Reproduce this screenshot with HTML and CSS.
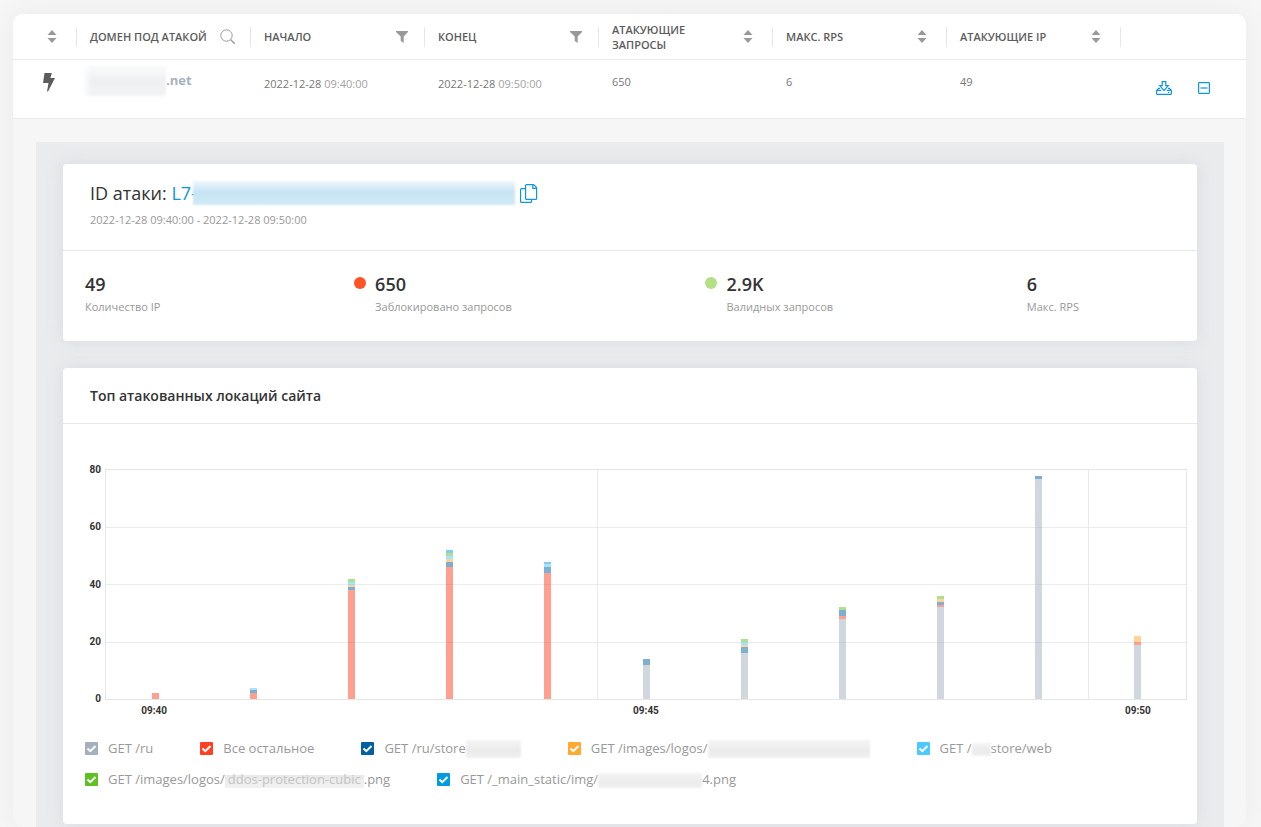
FILE: index.html
```html
<!DOCTYPE html>
<html lang="ru">
<head>
<meta charset="utf-8">
<meta name="viewport" content="width=device-width, initial-scale=1">
<title>Атаки</title>
<link rel="stylesheet" href="styles.css">
</head>
<body>
<svg class="sprite" aria-hidden="true">
  <symbol id="sort" viewBox="0 0 10 13"><path d="M5 0 9.500 5H.5zM5 13 .5 8h9z" fill="#999"/></symbol>
  <symbol id="filter" viewBox="0 0 12 12"><path d="M0 0h12v1L7.700 5.500V12L4.700 10V5.500L0 1z" fill="#999"/></symbol>
</svg>
<main class="panel">
  <table class="attacks">
    <colgroup><col class="col-type"><col><col><col><col><col><col><col class="col-actions"></colgroup>
    <thead>
      <tr>
        <th><div class="head head-sort"><button class="icon-btn" aria-label="Сортировать"><svg width="10" height="13"><use href="#sort"/></svg></button></div></th>
        <th><div class="head head-search"><span>ДОМЕН ПОД АТАКОЙ</span><button class="icon-btn" aria-label="Поиск"><svg width="16" height="16" viewBox="0 0 16 16" fill="none" stroke="#999"><circle cx="6.500" cy="6.500" r="5.700"/><path d="m10.800 10.800 4 4" stroke-width="1.300"/></svg></button></div></th>
        <th><div class="head head-filter"><span>НАЧАЛО</span><button class="icon-btn" aria-label="Фильтр"><svg width="12" height="12"><use href="#filter"/></svg></button></div></th>
        <th><div class="head head-filter"><span>КОНЕЦ</span><button class="icon-btn" aria-label="Фильтр"><svg width="12" height="12"><use href="#filter"/></svg></button></div></th>
        <th><div class="head"><span>АТАКУЮЩИЕ<br>ЗАПРОСЫ</span><button class="icon-btn" aria-label="Сортировать"><svg width="10" height="13"><use href="#sort"/></svg></button></div></th>
        <th><div class="head"><span>МАКС. RPS</span><button class="icon-btn" aria-label="Сортировать"><svg width="10" height="13"><use href="#sort"/></svg></button></div></th>
        <th><div class="head"><span>АТАКУЮЩИЕ IP</span><button class="icon-btn" aria-label="Сортировать"><svg width="10" height="13"><use href="#sort"/></svg></button></div></th>
        <th></th>
      </tr>
    </thead>
    <tbody>
      <tr>
        <td class="type"><svg width="12" height="19" viewBox="0 0 12 19"><path d="M1.500 0h7.300L7.400 5H12L5 18.500H4L5.500 10H0z" fill="#5c5c5c"/></svg></td>
        <td class="domain"><div class="domain-name"><span class="mask mask-domain"></span>.net</div></td>
        <td class="date">2022-12-28 <span class="time">09:40:00</span></td>
        <td class="date">2022-12-28 <span class="time">09:50:00</span></td>
        <td>650</td>
        <td>6</td>
        <td>49</td>
        <td>
          <div class="actions">
            <button class="icon-btn" aria-label="Скачать"><svg width="16" height="14" viewBox="0 0 16 14" fill="none" stroke="#0f97dd" stroke-width="1.200"><path d="M6.200.6h3.600v4h2.400L8 9.600l-4.200-5h2.400z"/><path d="M4 7.400H2.600L.6 9.400v3q0 1 1 1h12.800q1 0 1-1v-3l-2-2H12M.8 9.400h4.400M10.800 9.400h4.400M12 11.500h1.200"/></svg></button>
            <button class="icon-btn" aria-label="Свернуть"><svg width="12" height="12" viewBox="0 0 12 12" fill="none" stroke="#0f97dd" stroke-width="1.200"><rect x=".6" y=".6" width="10.800" height="10.800" rx=".8"/><path d="M2.500 6h7"/></svg></button>
          </div>
        </td>
      </tr>
    </tbody>
  </table>

  <div class="details">
    <section class="card">
      <header class="attack-head">
        <h1 class="attack-title"><span>ID атаки: <a href="#attack">L7-</a></span><span class="mask mask-id"></span><button class="icon-btn" aria-label="Копировать"><svg width="18" height="19" viewBox="0 0 18 19" fill="none" stroke="#0f97dd" stroke-width="1.200"><path d="M5.600 1.600q0-1 1-1h7l3 3v10.800q0 1-1 1h-9q-1 0-1-1zM12.800.8v3.600h3.700"/><path d="M5.600 4.600H1.600q-1 0-1 1v11.800q0 1 1 1h9q1 0 1-1v-2"/></svg></button></h1>
        <p class="period">2022-12-28 09:40:00 - 2022-12-28 09:50:00</p>
      </header>
      <div class="stats">
        <div class="stat"><div><strong>49</strong><span>Количество IP</span></div></div>
        <div class="stat"><i class="dot dot-red"></i><div><strong>650</strong><span>Заблокировано запросов</span></div></div>
        <div class="stat"><i class="dot dot-green"></i><div><strong>2.9K</strong><span>Валидных запросов</span></div></div>
        <div class="stat"><div><strong>6</strong><span>Макс. RPS</span></div></div>
      </div>
    </section>

    <section class="card">
      <h2 class="card-title">Топ атакованных локаций сайта</h2>
      <div class="chart">
        <div class="y-axis"><span>80</span><span>60</span><span>40</span><span>20</span><span>0</span></div>
        <div class="plot">
          <div class="rows"><i></i><i></i><i></i><i></i></div>
          <div class="bars" id="bars"></div>
        </div>
        <div class="x-axis"><span class="tick-1">09:40</span><span class="tick-6">09:45</span><span class="tick-11">09:50</span></div>
      </div>
      <div class="legend">
        <label><input type="checkbox" class="c-gray" checked><span>GET /ru</span></label>
        <label><input type="checkbox" class="c-red" checked><span>Все остальное</span></label>
        <label><input type="checkbox" class="c-navy" checked><span>GET /ru/store<span class="mask mask-store"></span></span></label>
        <label><input type="checkbox" class="c-orange" checked><span>GET /images/logos/<span class="mask mask-logo"></span></span></label>
        <label><input type="checkbox" class="c-sky" checked><span>GET /<span class="mask mask-lang"></span>store/web</span></label>
        <label><input type="checkbox" class="c-green" checked><span>GET /images/logos/<span class="veil">ddos-protection-cubic</span>.png</span></label>
        <label><input type="checkbox" class="c-blue" checked><span>GET /_main_static/img/<span class="mask mask-image"></span>4.png</span></label>
      </div>
    </section>
  </div>
</main>
<script src="chart.js"></script>
</body>
</html>
```
FILE: styles.css
```css
* { box-sizing: border-box; }

body {
  margin: 0;
  padding: 14px 15px 0 13px;
  background: #f6f6f6;
  color: #333;
  font: 11px/15px "Open Sans", "Noto Sans", sans-serif;
}

.sprite { display: none; }
svg { display: block; }

.icon-btn {
  flex: none;
  padding: 0;
  border: 0;
  background: none;
  cursor: pointer;
}

.panel {
  border-radius: 10px;
  background: #f6f6f6;
  box-shadow: 0 0 30px rgba(0, 0, 0, .05);
}

/* attacks table */
.attacks {
  width: 100%;
  table-layout: fixed;
  border-spacing: 0;
  border-radius: 10px 10px 0 0;
  background: #fff;
  color: #777;
}
.col-type { width: 64px; }
.col-actions { width: 125px; }
.attacks th {
  height: 46px;
  padding: 0;
  border-bottom: 1px solid #e9e9e9;
  color: #5c5c5c;
  font-weight: 600;
  text-align: left;
}
.head {
  display: flex;
  align-items: center;
  justify-content: space-between;
  height: 20px;
  padding: 0 19px 0 13px;
  border-right: 1px solid #e6e6e6;
}
.head-search { padding-right: 14px; }
.head-filter { padding-right: 16px; }
.head-sort { justify-content: flex-end; }
.attacks td {
  height: 59px;
  padding: 14px 0 0 13px;
  border-bottom: 1px solid #e9e9e9;
  vertical-align: top;
}
.attacks .type { padding: 13px 0 0 30px; }
.attacks .date { padding-top: 16px; }
.time { color: #a3a3a3; }
.attacks .domain { padding: 5px 0 0 5px; }
.domain-name {
  display: flex;
  align-items: center;
  height: 31px;
  color: #a7b2c0;
  font-size: 13px;
  font-weight: 700;
}
.actions {
  display: flex;
  align-items: center;
  gap: 26px;
  padding: 7px 0 0 22px;
}

/* blurred-out private values */
.mask {
  display: inline-block;
  flex: none;
  vertical-align: middle;
  background: linear-gradient(#f5f5f5, #ebebeb 60%, #f0f0f0);
  filter: blur(1px);
}
.mask-domain {
  width: 84px;
  height: 31px;
  background: linear-gradient(90deg, #fff, transparent 12%), linear-gradient(#fbfcfc, #edeff1 55%, #f3f4f5);
}
.mask-id {
  width: 322px;
  height: 24px;
  margin-left: -4px;
  background: linear-gradient(#eff8fc, #c7e4f4 45%, #d0e9f6);
}
.mask-store { width: 55px; height: 18px; }
.mask-logo { width: 162px; height: 18px; }
.mask-lang { width: 19px; height: 13px; }
.mask-image { width: 104px; height: 15px; }
.veil {
  padding: 0 3px;
  background: linear-gradient(#fff 30%, #e9e9e9 30%, #f2f2f2);
  color: #c4c4c4;
}

/* attack details */
.details {
  display: grid;
  gap: 27px;
  margin: 23px 22px 0 23px;
  padding: 22px 27px 3px;
  background: #eaebed;
}
.card {
  min-width: 0;
  border-radius: 4px;
  background: #fff;
  box-shadow: 0 0 16px rgba(160, 180, 190, .25);
}
.attack-head {
  padding: 13px 27px 23px;
  border-bottom: 1px solid #e6e8ea;
}
.attack-title {
  display: flex;
  align-items: center;
  height: 32px;
  margin: 0;
  font-size: 18px;
  font-weight: 400;
}
.attack-title a { color: #0f97dd; text-decoration: none; }
.attack-title .icon-btn { margin-left: 5px; }
.period { margin: 3px 0 0; color: #999; }
.stats {
  display: flex;
  justify-content: space-between;
  padding: 21px 118px 27px 22px;
}
.stat { display: flex; gap: 9px; }
.stat strong {
  display: block;
  font-size: 18px;
  font-weight: 600;
  line-height: 24px;
}
.stat span { display: block; margin-top: 3px; color: #999; }
.dot {
  width: 12px;
  height: 12px;
  margin-top: 5px;
  border-radius: 50%;
}
.dot-red { background: #ff5226; }
.dot-green { background: #b1e085; }
.card-title {
  margin: 0;
  padding: 18px 27px 17px;
  border-bottom: 1px solid #e6e8ea;
  font-size: 14px;
  font-weight: 600;
  line-height: 20px;
}

/* stacked bar chart */
.chart {
  display: grid;
  grid-template-columns: 38px 1fr;
  padding: 45px 10px 0 0;
  margin-left: 4px;
  color: #333;
  font: 700 10px/10px Roboto, "Liberation Sans", sans-serif;
}
.y-axis {
  display: flex;
  flex-direction: column;
  justify-content: space-between;
  margin: -4px 4px -4px 0;
  text-align: right;
}
.plot {
  display: grid;
  height: 231px;
  border: 1px solid #e6e6e6;
}
.rows, .bars { grid-area: 1 / 1; display: grid; min-height: 0; }
.rows i:not(:first-child) { border-top: 1px solid #ebebeb; }
.bars { grid-template-columns: repeat(11, 1fr); }
.column {
  display: flex;
  flex-direction: column-reverse;
  align-items: center;
}
.column:nth-child(6), .column:nth-child(11) { border-left: 1px solid #e9e9e9; }
.segment { width: 7px; opacity: .5; }
.x-axis {
  grid-column: 2;
  display: grid;
  grid-template-columns: repeat(11, 1fr);
  padding-top: 6px;
  text-align: center;
}
.tick-1 { grid-column: 1; }
.tick-6 { grid-column: 6; }
.tick-11 { grid-column: 11; }

.c-gray { background-color: #a4b0bd; }
.c-red { background-color: #ff4022; }
.c-navy { background-color: #0060a1; }
.c-orange { background-color: #ffa931; }
.c-sky { background-color: #4ccaff; }
.c-green { background-color: #5dc122; }
.c-blue { background-color: #009be0; }

.legend {
  display: flex;
  flex-wrap: wrap;
  gap: 11px 47px;
  padding: 22px 22px 35px;
  color: #999;
  font-size: 13px;
  line-height: 20px;
}
.legend label { display: flex; align-items: center; gap: 10px; height: 20px; white-space: nowrap; }
.legend input {
  appearance: none;
  width: 13px;
  height: 13px;
  margin: 0;
  border-radius: 1px;
}
.legend input:checked {
  background-image: url("data:image/svg+xml,%3Csvg xmlns='http://www.w3.org/2000/svg' viewBox='0 0 13 13'%3E%3Cpath d='M2.500 6.500 5.300 9.200 10.500 4' fill='none' stroke='white' stroke-width='2'/%3E%3C/svg%3E");
}
```
FILE: chart.js
```js
// Requests per minute, bottom segment first.
const MAX = 80;
const data = [
  [["red", 2]],
  [["red", 2], ["navy", 1], ["sky", 1]],
  [["red", 38], ["navy", 1], ["orange", 1], ["sky", 1], ["green", 1]],
  [["red", 46], ["navy", 2], ["orange", 1], ["sky", 1], ["green", 1], ["blue", 1]],
  [["red", 44], ["navy", 2], ["sky", 1], ["blue", 1]],
  [["gray", 12], ["navy", 2]],
  [["gray", 16], ["navy", 2], ["orange", 1], ["sky", 1], ["green", 1]],
  [["gray", 28], ["red", 1], ["navy", 2], ["green", 1]],
  [["gray", 32], ["red", 1], ["navy", 1], ["orange", 1], ["green", 1]],
  [["gray", 77], ["navy", 1]],
  [["gray", 19], ["red", 1], ["orange", 2]],
];
const bars = document.getElementById("bars");
for (const minute of data) {
  const column = document.createElement("div");
  column.className = "column";
  for (const [color, value] of minute) {
    const segment = document.createElement("div");
    segment.className = `segment c-${color}`;
    segment.style.height = `${(value / MAX) * 100}%`;
    column.append(segment);
  }
  bars.append(column);
}
```
